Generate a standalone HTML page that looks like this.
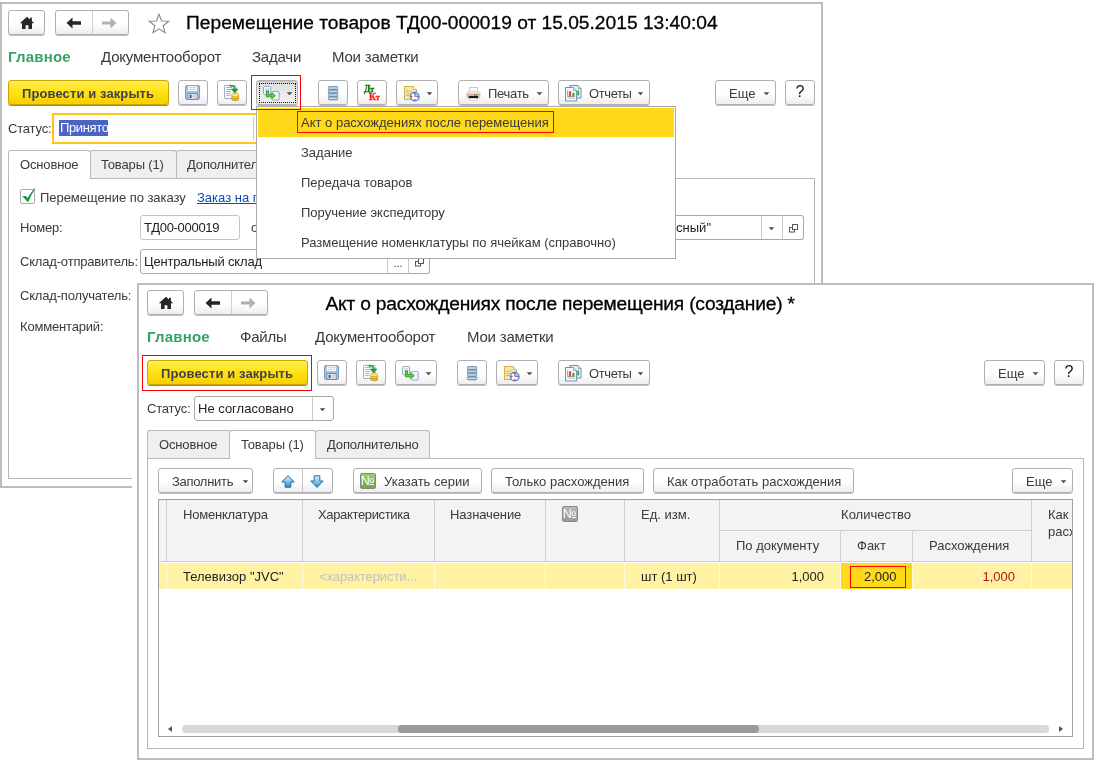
<!DOCTYPE html>
<html lang="ru"><head><meta charset="utf-8"><title>Перемещение товаров</title>
<style>
*{box-sizing:border-box;margin:0;padding:0}
html,body{width:1104px;height:770px;background:#fff;overflow:hidden}
body{will-change:transform;position:relative;font-family:"Liberation Sans",sans-serif;font-size:13px;color:#3a3a3a}
.abs,.win,.btn,.t,.inp,.tab,.panel{position:absolute}
.win{border:2px solid #bdbdbd;background:#fff}
.t{white-space:nowrap;line-height:16px;height:16px}
.lb{letter-spacing:-.18px}
.title{font-size:19.2px;color:#000;line-height:24px;height:24px;-webkit-text-stroke:.3px #000}
.menu{font-size:15px;line-height:18px;height:18px;color:#3a3a3a;letter-spacing:-.2px}
.menu.on{font-weight:bold;color:#35a366;letter-spacing:.2px}
.btn{height:25px;border:1px solid #b0b0b0;border-radius:3px;background:linear-gradient(#fff 0%,#fff 55%,#efedef 100%);box-shadow:0 1px 0 #bdbdbd}
.btn.y{border-color:#c9a700;background:linear-gradient(#ffec52 0%,#ffe212 50%,#f6cf00 100%);box-shadow:0 1px 0 #a88f14}
.btn.y .t{font-weight:bold;color:#40434c;letter-spacing:.1px}
.inp{border:1px solid #c4c4c4;border-radius:3px;background:#fff}
.tab{height:28px;border:1px solid #b9b9b9;border-bottom:none;border-radius:3px 3px 0 0;background:#f0eef0}
.tab.on{background:#fff;height:29px}
.tab .t{letter-spacing:-.15px}
.panel{border:1px solid #b6b6b6;background:#fff}
.vl{top:0;width:1px;background:#cfcfcf}
.red{position:absolute;border:1px solid #f00}
svg{position:absolute;overflow:visible}
</style></head><body>
<div class="win" style="left:0;top:2px;width:823px;height:486px"></div>
<div class="btn" style="left:8px;top:10px;width:37px"><svg width="16" height="14" style="left:10px;top:5px" viewBox="0 0 16 14"><path d="M8 0.8 L0.8 7.2 H3 V13 H6.6 V9.2 H9.4 V13 H13 V7.2 H15.2 L12.9 5.1 V1.8 H11 V3.4 Z" fill="#262626"/></svg></div>
<div class="btn" style="left:55px;top:10px;width:74px"><div class="abs" style="left:36px;top:0;width:1px;height:23px;background:#d0d0d0"></div>
<svg width="16" height="12" style="left:10px;top:6px" viewBox="0 0 16 12"><path d="M0.5 6 L6.5 0.5 V4.3 H15 V7.7 H6.5 V11.5 Z" fill="#262626"/></svg>
<svg width="16" height="12" style="left:45px;top:6px" viewBox="0 0 16 12"><path d="M15.5 6 L9.5 0.5 V4.6 H1 V7.4 H9.5 V11.5 Z" fill="#b0b0b0"/></svg></div>
<svg width="22" height="21" style="left:147.5px;top:13px" viewBox="0 0 22 21"><path d="M11 1.2 L13.6 8 L20.8 8.3 L15.1 12.8 L17.1 19.8 L11 15.8 L4.9 19.8 L6.9 12.8 L1.2 8.3 L8.4 8 Z" fill="#fff" stroke="#8a8a8a" stroke-width="1.1" stroke-linejoin="miter"/></svg>
<div class="t title" style="left:186px;top:11px">Перемещение товаров ТД00-000019 от 15.05.2015 13:40:04</div>
<div class="t menu on" style="left:8px;top:48px">Главное</div>
<div class="t menu" style="left:101px;top:48px">Документооборот</div>
<div class="t menu" style="left:252px;top:48px">Задачи</div>
<div class="t menu" style="left:332px;top:48px">Мои заметки</div>
<div class="btn y" style="left:8px;top:80px;width:161px"><div class="t" style="left:13px;top:5px">Провести и закрыть</div></div>
<div class="btn" style="left:178px;top:80px;width:30px"><svg width="16" height="16" style="left:6px;top:4px" viewBox="0 0 16 16">
<rect x="0.5" y="0.5" width="14" height="14" rx="1.4" fill="#a6c2de" stroke="#7d9cbc"/>
<rect x="2.8" y="0.9" width="9.4" height="5.4" fill="#fff" stroke="#9bb6d0" stroke-width=".6"/>
<path d="M4 2.6 H11 M4 4.4 H11" stroke="#a8d2e8" stroke-width=".8"/>
<rect x="2.9" y="8.5" width="9.2" height="5.8" fill="#e9edf2" stroke="#5d7d9d" stroke-width=".8"/>
<rect x="4.6" y="9.8" width="2" height="3.4" fill="#3a5b82"/>
<rect x="7.4" y="9.4" width="4" height="4.2" fill="#cfd6de"/>
</svg></div>
<div class="btn" style="left:217px;top:80px;width:30px"><svg width="16" height="17" style="left:6px;top:4px" viewBox="0 0 16 17">
<rect x="0.5" y="0.5" width="11.6" height="13" rx=".8" fill="#fcfdff" stroke="#8ba6c2" stroke-width=".9"/>
<path d="M2.2 2.5 H8 M2.2 4.5 H7 M2.2 6.5 H7 M2.2 8.5 H6.4 M2.2 10.5 H6.4" stroke="#9db3c9" stroke-width="1"/>
<path d="M5.5 0.6 C9.5 0.2 10.6 2 10.6 4.2" fill="none" stroke="#2f9a2f" stroke-width="1.8"/>
<path d="M7.2 4 H14 L10.6 8 Z" fill="#2f9a2f" stroke="#1f7d22" stroke-width=".5"/>
<ellipse cx="11.2" cy="14" rx="3.8" ry="1.8" fill="#e9b52a" stroke="#c48f10" stroke-width=".6"/>
<ellipse cx="11.2" cy="12" rx="3.8" ry="1.8" fill="#f4c83a" stroke="#c48f10" stroke-width=".6"/>
<ellipse cx="11.2" cy="10" rx="3.8" ry="1.8" fill="#fbe27a" stroke="#c99a18" stroke-width=".6"/>
</svg></div>
<div class="btn" style="left:256px;top:80px;width:42px;background:linear-gradient(#c4c4c4 0%,#dedede 12%,#e9e9e9 50%,#f1f1f1 100%)"><div class="abs" style="left:2px;top:2px;width:37px;height:20px;border:1px dotted #111"></div><svg width="17" height="15" style="left:6px;top:5px" viewBox="0 0 17 15">
<rect x="0.5" y="0.5" width="7.2" height="8.2" rx="1" fill="#f1f6fb" stroke="#86a3c0" stroke-width=".9"/>
<path d="M2.2 3 H6 M2.2 4.8 H6" stroke="#a9c0d6" stroke-width=".8"/>
<rect x="9" y="5.4" width="7.2" height="8.6" rx="1" fill="#eef4fa" stroke="#86a3c0" stroke-width=".9"/>
<path d="M3.4 5 H5.6 V8.7 H8.8 V6.8 L12.3 9.7 L8.8 12.6 V10.8 H3.4 Z" fill="#6bd047" stroke="#2a9a24" stroke-width=".9" stroke-linejoin="round"/>
</svg><svg width="7" height="4" style="left:29px;top:11px" viewBox="0 0 7 4"><path d="M0.7 0.3 H6.3 L3.5 3.3 Z" fill="#4d4d4d"/></svg></div>
<div class="btn" style="left:318px;top:80px;width:30px"><svg width="11" height="15" style="left:9px;top:5px" viewBox="0 0 11 15"><defs><linearGradient id="lg095" x1="0" y1="0" x2="0" y2="1"><stop offset="0" stop-color="#86a5c2"/><stop offset=".55" stop-color="#cddbe8"/><stop offset="1" stop-color="#7c9cba"/></linearGradient><linearGradient id="lg195" x1="0" y1="0" x2="0" y2="1"><stop offset="0" stop-color="#86a5c2"/><stop offset=".55" stop-color="#cddbe8"/><stop offset="1" stop-color="#7c9cba"/></linearGradient><linearGradient id="lg295" x1="0" y1="0" x2="0" y2="1"><stop offset="0" stop-color="#86a5c2"/><stop offset=".55" stop-color="#cddbe8"/><stop offset="1" stop-color="#7c9cba"/></linearGradient><linearGradient id="lg395" x1="0" y1="0" x2="0" y2="1"><stop offset="0" stop-color="#86a5c2"/><stop offset=".55" stop-color="#cddbe8"/><stop offset="1" stop-color="#7c9cba"/></linearGradient></defs><rect x="0.4" y="0.4" width="9.4" height="3.2" rx=".9" fill="url(#lg095)" stroke="#5f82a3" stroke-width=".7"/><rect x="0.4" y="3.85" width="9.4" height="3.2" rx=".9" fill="url(#lg195)" stroke="#5f82a3" stroke-width=".7"/><rect x="0.4" y="7.300000000000001" width="9.4" height="3.2" rx=".9" fill="url(#lg295)" stroke="#5f82a3" stroke-width=".7"/><rect x="0.4" y="10.750000000000002" width="9.4" height="3.2" rx=".9" fill="url(#lg395)" stroke="#5f82a3" stroke-width=".7"/></svg></div>
<div class="btn" style="left:357px;top:80px;width:30px"><div class="t" style="left:6px;top:3px;font-family:'Liberation Serif',serif;font-weight:bold;font-size:9.5px;line-height:10px;height:10px;color:#0b7a0b;letter-spacing:-.2px;-webkit-text-stroke:.35px #0b7a0b">Д<span style="font-size:8px">т</span></div>
<div class="t" style="left:11px;top:11px;font-family:'Liberation Serif',serif;font-weight:bold;font-size:9.5px;line-height:10px;height:10px;color:#ff2222;letter-spacing:-.2px;-webkit-text-stroke:.35px #ff2222">К<span style="font-size:8px">т</span></div></div>
<div class="btn" style="left:396px;top:80px;width:42px"><svg width="16" height="16" style="left:7px;top:5px" viewBox="0 0 16 16">
<path d="M0.5 0.5 H9.4 L12.5 3.6 V13.6 H0.5 Z" fill="#f6e6ac" stroke="#d2b04a"/>
<path d="M9.4 0.5 V3.6 H12.5" fill="#fff8dc" stroke="#d2b04a" stroke-width=".8"/>
<path d="M2.4 5.2 H4.4 M5.4 5.2 H7.4 M2.4 7.4 H3.4 M4.4 7.4 H6.4 M2.4 9.6 H5.4" stroke="#c9a640" stroke-width="1"/>
<circle cx="10.8" cy="10.6" r="4.3" fill="#fff" stroke="#3f7ccb" stroke-width="1.2"/>
<path d="M10.8 10.6 V7 A3.6 3.6 0 0 1 14.4 10.6 Z" fill="#a9c4ee"/>
<path d="M10.8 7.4 V10.6 H13.6" fill="none" stroke="#3b6fb5" stroke-width=".7"/>
<circle cx="10.8" cy="7.6" r=".8" fill="#f02a2a"/><circle cx="10.8" cy="13.6" r=".8" fill="#f02a2a"/>
<circle cx="7.8" cy="10.6" r=".8" fill="#f02a2a"/><circle cx="13.8" cy="10.6" r=".8" fill="#f02a2a"/>
</svg><svg width="7" height="4" style="left:29px;top:11px" viewBox="0 0 7 4"><path d="M0.7 0.3 H6.3 L3.5 3.3 Z" fill="#4d4d4d"/></svg></div>
<div class="btn" style="left:458px;top:80px;width:91px"><svg width="15" height="14" style="left:7px;top:6px" viewBox="0 0 15 14">
<rect x="3.4" y="0.5" width="8" height="5.4" fill="#f7fafd" stroke="#a9c6e2" stroke-width=".8"/>
<rect x="0.5" y="4.6" width="13.8" height="6.8" rx="2" fill="#d3bba8" stroke="#e6dad0" stroke-width=".8"/>
<rect x="1.4" y="5" width="12" height="1.8" rx=".9" fill="#efe6de"/>
<rect x="2.8" y="9" width="9.2" height="2.3" fill="#1a1a1a"/>
<rect x="3.2" y="11.3" width="8.4" height="2.2" fill="#fff" stroke="#c4c4c4" stroke-width=".6"/>
<circle cx="8.8" cy="7.8" r=".9" fill="#f03a2a"/><circle cx="10.9" cy="7.8" r=".9" fill="#2fb02f"/>
</svg><div class="t" style="left:29px;top:5px;letter-spacing:-.3px">Печать</div><svg width="7" height="4" style="left:77px;top:11px" viewBox="0 0 7 4"><path d="M0.7 0.3 H6.3 L3.5 3.3 Z" fill="#4d4d4d"/></svg></div>
<div class="btn" style="left:558px;top:80px;width:92px"><svg width="17" height="17" style="left:6px;top:4px" viewBox="0 0 17 17">
<path d="M4.9 0.5 H13 L16 3.5 V13 H4.9 Z" fill="#eef4fa" stroke="#6f8fb0"/>
<path d="M13 0.5 V3.5 H16" fill="#dbe6f1" stroke="#6f8fb0" stroke-width=".7"/>
<rect x="12.3" y="5.4" width="1.8" height="5" fill="#2fa52f"/>
<path d="M0.5 2.5 H8.6 L11.6 5.5 V16 H0.5 Z" fill="#f6f9fc" stroke="#6f8fb0"/>
<path d="M8.6 2.5 V5.5 H11.6" fill="#dbe6f1" stroke="#6f8fb0" stroke-width=".7"/>
<path d="M2.7 5.6 V11.6 H9.8" fill="none" stroke="#8a5a5a" stroke-width=".7"/>
<rect x="4.1" y="6.2" width="2" height="5.2" fill="#f0402a"/>
<rect x="7.4" y="7.8" width="2" height="3.6" fill="#2fa52f"/>
<path d="M2.4 13.4 H9.8" stroke="#9fcbe6" stroke-width=".9"/>
</svg><div class="t" style="left:30px;top:5px;letter-spacing:-.4px">Отчеты</div><svg width="7" height="4" style="left:78px;top:11px" viewBox="0 0 7 4"><path d="M0.7 0.3 H6.3 L3.5 3.3 Z" fill="#4d4d4d"/></svg></div>
<div class="btn" style="left:715px;top:80px;width:61px"><div class="t" style="left:13px;top:5px">Еще</div><svg width="7" height="4" style="left:47px;top:11px" viewBox="0 0 7 4"><path d="M0.7 0.3 H6.3 L3.5 3.3 Z" fill="#4d4d4d"/></svg></div>
<div class="btn" style="left:785px;top:80px;width:30px"><div class="t" style="left:9.5px;top:3px;font-size:16px;color:#111">?</div></div>
<div class="t lb" style="left:8px;top:121px">Статус:</div>
<div class="abs" style="left:52px;top:113px;width:260px;height:31px;border:2px solid #ffc61a;background:#fff"></div>
<div class="abs" style="left:59px;top:120px;width:49px;height:16px;background:#4c63c2"></div>
<div class="t" style="left:60px;top:120px;color:#fff;letter-spacing:-.35px">Принято</div>
<div class="abs" style="left:253px;top:117px;width:1px;height:23px;background:#c8c8c8"></div>
<div class="panel" style="left:8px;top:178px;width:807px;height:301px"></div>
<div class="tab" style="left:90px;top:150px;width:87px"><div class="t" style="left:10px;top:6px">Товары (1)</div></div>
<div class="tab" style="left:176px;top:150px;width:110px"><div class="t" style="left:10px;top:6px">Дополнительно</div></div>
<div class="tab on" style="left:8px;top:150px;width:83px"><div class="t" style="left:11px;top:6px">Основное</div></div>
<div class="abs" style="left:20px;top:189px;width:15px;height:15px;border:1px solid #ababab;border-radius:2px;background:#fff"></div>
<svg width="16" height="16" style="left:20px;top:187px" viewBox="0 0 16 16"><path d="M2.1 9.3 L5.8 8.9 L7.6 11 C10 7 12.5 3.5 14.8 0.9 L14.8 2.6 C12.5 6 10.5 10 8.4 14.8 L7.2 14.8 C5.8 12.6 4 10.8 2.1 9.3 Z" fill="#0f9a3c"/></svg>
<div class="t" style="left:40px;top:190px;letter-spacing:-.05px">Перемещение по заказу</div>
<div class="t" style="left:197px;top:190px;color:#0a4bb5;text-decoration:underline">Заказ на перемещение</div>
<div class="t lb" style="left:20px;top:220px">Номер:</div>
<div class="inp" style="left:140px;top:215px;width:100px;height:25px"><div class="t" style="left:3px;top:4px;color:#222;letter-spacing:-.3px">ТД00-000019</div></div>
<div class="t lb" style="left:251px;top:220px">от:</div>
<div class="inp" style="left:560px;top:215px;width:223px;height:25px;border-color:#a8a8a8;border-radius:3px 0 0 3px"><div class="t" style="left:0;width:150px;text-align:right;top:4px;color:#222">Магазин "Красный"</div><div class="abs" style="left:200px;top:0;width:1px;height:23px;background:#c8c8c8"></div><svg width="7" height="4" style="left:207px;top:11px" viewBox="0 0 7 4"><path d="M0.7 0.3 H6.3 L3.5 3.3 Z" fill="#4d4d4d"/></svg></div>
<div class="btn" style="left:782px;top:215px;width:22px;border-radius:0 3px 3px 0;box-shadow:none;background:#fff;border-color:#a8a8a8;border-left-color:#c8c8c8"><svg width="10" height="9" style="left:6px;top:8px" viewBox="0 0 10 9"><rect x="0.5" y="3.5" width="5" height="4.5" fill="#fff" stroke="#555"/><rect x="3.5" y="0.5" width="5" height="5" fill="#fff" stroke="#555"/></svg></div>
<div class="t lb" style="left:20px;top:254px">Склад-отправитель:</div>
<div class="inp" style="left:140px;top:249px;width:248px;height:25px;border-color:#a8a8a8;border-radius:3px 0 0 3px"><div class="t" style="left:3px;top:4px;color:#222;letter-spacing:-.18px">Центральный склад</div></div>
<div class="btn" style="left:387px;top:249px;width:22px;border-radius:0;box-shadow:none;background:#fff;border-color:#a8a8a8;border-left-color:#c8c8c8"><div class="t" style="left:5.5px;top:5px;font-size:11px">...</div></div>
<div class="btn" style="left:408px;top:249px;width:22px;border-radius:0 3px 3px 0;box-shadow:none;background:#fff;border-color:#a8a8a8;border-left-color:#c8c8c8"><svg width="10" height="9" style="left:6px;top:8px" viewBox="0 0 10 9"><rect x="0.5" y="3.5" width="5" height="4.5" fill="#fff" stroke="#555"/><rect x="3.5" y="0.5" width="5" height="5" fill="#fff" stroke="#555"/></svg></div>
<div class="t lb" style="left:20px;top:288px">Склад-получатель:</div>
<div class="t lb" style="left:20px;top:319px">Комментарий:</div>
<div class="abs" style="left:256px;top:106px;width:420px;height:153px;border:1px solid #a9a9a9;background:#fff"></div>
<div class="abs" style="left:258px;top:108px;width:416px;height:29px;background:#ffd91a"></div>
<div class="red" style="left:297px;top:111px;width:257px;height:22px"></div>
<div class="t" style="left:301px;top:115px">Акт о расхождениях после перемещения</div>
<div class="t" style="left:301px;top:145px">Задание</div>
<div class="t" style="left:301px;top:175px">Передача товаров</div>
<div class="t" style="left:301px;top:205px">Поручение экспедитору</div>
<div class="t" style="left:301px;top:235px">Размещение номенклатуры по ячейкам (справочно)</div>
<div class="red" style="left:251px;top:75px;width:50px;height:35px"></div>
<div class="abs" style="left:132px;top:283px;width:6px;height:480px;background:#fff"></div>
<div class="win" style="left:137px;top:283px;width:957px;height:477px"></div>
<div class="btn" style="left:147px;top:290px;width:37px"><svg width="16" height="14" style="left:10px;top:5px" viewBox="0 0 16 14"><path d="M8 0.8 L0.8 7.2 H3 V13 H6.6 V9.2 H9.4 V13 H13 V7.2 H15.2 L12.9 5.1 V1.8 H11 V3.4 Z" fill="#262626"/></svg></div>
<div class="btn" style="left:194px;top:290px;width:74px"><div class="abs" style="left:36px;top:0;width:1px;height:23px;background:#d0d0d0"></div>
<svg width="16" height="12" style="left:10px;top:6px" viewBox="0 0 16 12"><path d="M0.5 6 L6.5 0.5 V4.3 H15 V7.7 H6.5 V11.5 Z" fill="#262626"/></svg>
<svg width="16" height="12" style="left:45px;top:6px" viewBox="0 0 16 12"><path d="M15.5 6 L9.5 0.5 V4.6 H1 V7.4 H9.5 V11.5 Z" fill="#b0b0b0"/></svg></div>
<div class="t title" style="left:325.5px;top:292px;letter-spacing:-.2px">Акт о расхождениях после перемещения (создание) *</div>
<div class="t menu on" style="left:147px;top:328px">Главное</div>
<div class="t menu" style="left:240px;top:328px">Файлы</div>
<div class="t menu" style="left:315px;top:328px">Документооборот</div>
<div class="t menu" style="left:467px;top:328px">Мои заметки</div>
<div class="red" style="left:142px;top:355px;width:170px;height:36px"></div>
<div class="btn y" style="left:147px;top:360px;width:161px"><div class="t" style="left:13px;top:5px">Провести и закрыть</div></div>
<div class="btn" style="left:317px;top:360px;width:30px"><svg width="16" height="16" style="left:6px;top:4px" viewBox="0 0 16 16">
<rect x="0.5" y="0.5" width="14" height="14" rx="1.4" fill="#a6c2de" stroke="#7d9cbc"/>
<rect x="2.8" y="0.9" width="9.4" height="5.4" fill="#fff" stroke="#9bb6d0" stroke-width=".6"/>
<path d="M4 2.6 H11 M4 4.4 H11" stroke="#a8d2e8" stroke-width=".8"/>
<rect x="2.9" y="8.5" width="9.2" height="5.8" fill="#e9edf2" stroke="#5d7d9d" stroke-width=".8"/>
<rect x="4.6" y="9.8" width="2" height="3.4" fill="#3a5b82"/>
<rect x="7.4" y="9.4" width="4" height="4.2" fill="#cfd6de"/>
</svg></div>
<div class="btn" style="left:356px;top:360px;width:30px"><svg width="16" height="17" style="left:6px;top:4px" viewBox="0 0 16 17">
<rect x="0.5" y="0.5" width="11.6" height="13" rx=".8" fill="#fcfdff" stroke="#8ba6c2" stroke-width=".9"/>
<path d="M2.2 2.5 H8 M2.2 4.5 H7 M2.2 6.5 H7 M2.2 8.5 H6.4 M2.2 10.5 H6.4" stroke="#9db3c9" stroke-width="1"/>
<path d="M5.5 0.6 C9.5 0.2 10.6 2 10.6 4.2" fill="none" stroke="#2f9a2f" stroke-width="1.8"/>
<path d="M7.2 4 H14 L10.6 8 Z" fill="#2f9a2f" stroke="#1f7d22" stroke-width=".5"/>
<ellipse cx="11.2" cy="14" rx="3.8" ry="1.8" fill="#e9b52a" stroke="#c48f10" stroke-width=".6"/>
<ellipse cx="11.2" cy="12" rx="3.8" ry="1.8" fill="#f4c83a" stroke="#c48f10" stroke-width=".6"/>
<ellipse cx="11.2" cy="10" rx="3.8" ry="1.8" fill="#fbe27a" stroke="#c99a18" stroke-width=".6"/>
</svg></div>
<div class="btn" style="left:395px;top:360px;width:42px"><svg width="17" height="15" style="left:6px;top:5px" viewBox="0 0 17 15">
<rect x="0.5" y="0.5" width="7.2" height="8.2" rx="1" fill="#f1f6fb" stroke="#86a3c0" stroke-width=".9"/>
<path d="M2.2 3 H6 M2.2 4.8 H6" stroke="#a9c0d6" stroke-width=".8"/>
<rect x="9" y="5.4" width="7.2" height="8.6" rx="1" fill="#eef4fa" stroke="#86a3c0" stroke-width=".9"/>
<path d="M3.4 5 H5.6 V8.7 H8.8 V6.8 L12.3 9.7 L8.8 12.6 V10.8 H3.4 Z" fill="#6bd047" stroke="#2a9a24" stroke-width=".9" stroke-linejoin="round"/>
</svg><svg width="7" height="4" style="left:29px;top:11px" viewBox="0 0 7 4"><path d="M0.7 0.3 H6.3 L3.5 3.3 Z" fill="#4d4d4d"/></svg></div>
<div class="btn" style="left:457px;top:360px;width:30px"><svg width="11" height="15" style="left:9px;top:5px" viewBox="0 0 11 15"><defs><linearGradient id="lg095" x1="0" y1="0" x2="0" y2="1"><stop offset="0" stop-color="#86a5c2"/><stop offset=".55" stop-color="#cddbe8"/><stop offset="1" stop-color="#7c9cba"/></linearGradient><linearGradient id="lg195" x1="0" y1="0" x2="0" y2="1"><stop offset="0" stop-color="#86a5c2"/><stop offset=".55" stop-color="#cddbe8"/><stop offset="1" stop-color="#7c9cba"/></linearGradient><linearGradient id="lg295" x1="0" y1="0" x2="0" y2="1"><stop offset="0" stop-color="#86a5c2"/><stop offset=".55" stop-color="#cddbe8"/><stop offset="1" stop-color="#7c9cba"/></linearGradient><linearGradient id="lg395" x1="0" y1="0" x2="0" y2="1"><stop offset="0" stop-color="#86a5c2"/><stop offset=".55" stop-color="#cddbe8"/><stop offset="1" stop-color="#7c9cba"/></linearGradient></defs><rect x="0.4" y="0.4" width="9.4" height="3.2" rx=".9" fill="url(#lg095)" stroke="#5f82a3" stroke-width=".7"/><rect x="0.4" y="3.85" width="9.4" height="3.2" rx=".9" fill="url(#lg195)" stroke="#5f82a3" stroke-width=".7"/><rect x="0.4" y="7.300000000000001" width="9.4" height="3.2" rx=".9" fill="url(#lg295)" stroke="#5f82a3" stroke-width=".7"/><rect x="0.4" y="10.750000000000002" width="9.4" height="3.2" rx=".9" fill="url(#lg395)" stroke="#5f82a3" stroke-width=".7"/></svg></div>
<div class="btn" style="left:496px;top:360px;width:42px"><svg width="16" height="16" style="left:7px;top:5px" viewBox="0 0 16 16">
<path d="M0.5 0.5 H9.4 L12.5 3.6 V13.6 H0.5 Z" fill="#f6e6ac" stroke="#d2b04a"/>
<path d="M9.4 0.5 V3.6 H12.5" fill="#fff8dc" stroke="#d2b04a" stroke-width=".8"/>
<path d="M2.4 5.2 H4.4 M5.4 5.2 H7.4 M2.4 7.4 H3.4 M4.4 7.4 H6.4 M2.4 9.6 H5.4" stroke="#c9a640" stroke-width="1"/>
<circle cx="10.8" cy="10.6" r="4.3" fill="#fff" stroke="#3f7ccb" stroke-width="1.2"/>
<path d="M10.8 10.6 V7 A3.6 3.6 0 0 1 14.4 10.6 Z" fill="#a9c4ee"/>
<path d="M10.8 7.4 V10.6 H13.6" fill="none" stroke="#3b6fb5" stroke-width=".7"/>
<circle cx="10.8" cy="7.6" r=".8" fill="#f02a2a"/><circle cx="10.8" cy="13.6" r=".8" fill="#f02a2a"/>
<circle cx="7.8" cy="10.6" r=".8" fill="#f02a2a"/><circle cx="13.8" cy="10.6" r=".8" fill="#f02a2a"/>
</svg><svg width="7" height="4" style="left:29px;top:11px" viewBox="0 0 7 4"><path d="M0.7 0.3 H6.3 L3.5 3.3 Z" fill="#4d4d4d"/></svg></div>
<div class="btn" style="left:558px;top:360px;width:92px"><svg width="17" height="17" style="left:6px;top:4px" viewBox="0 0 17 17">
<path d="M4.9 0.5 H13 L16 3.5 V13 H4.9 Z" fill="#eef4fa" stroke="#6f8fb0"/>
<path d="M13 0.5 V3.5 H16" fill="#dbe6f1" stroke="#6f8fb0" stroke-width=".7"/>
<rect x="12.3" y="5.4" width="1.8" height="5" fill="#2fa52f"/>
<path d="M0.5 2.5 H8.6 L11.6 5.5 V16 H0.5 Z" fill="#f6f9fc" stroke="#6f8fb0"/>
<path d="M8.6 2.5 V5.5 H11.6" fill="#dbe6f1" stroke="#6f8fb0" stroke-width=".7"/>
<path d="M2.7 5.6 V11.6 H9.8" fill="none" stroke="#8a5a5a" stroke-width=".7"/>
<rect x="4.1" y="6.2" width="2" height="5.2" fill="#f0402a"/>
<rect x="7.4" y="7.8" width="2" height="3.6" fill="#2fa52f"/>
<path d="M2.4 13.4 H9.8" stroke="#9fcbe6" stroke-width=".9"/>
</svg><div class="t" style="left:30px;top:5px;letter-spacing:-.4px">Отчеты</div><svg width="7" height="4" style="left:78px;top:11px" viewBox="0 0 7 4"><path d="M0.7 0.3 H6.3 L3.5 3.3 Z" fill="#4d4d4d"/></svg></div>
<div class="btn" style="left:984px;top:360px;width:61px"><div class="t" style="left:13px;top:5px">Еще</div><svg width="7" height="4" style="left:47px;top:11px" viewBox="0 0 7 4"><path d="M0.7 0.3 H6.3 L3.5 3.3 Z" fill="#4d4d4d"/></svg></div>
<div class="btn" style="left:1054px;top:360px;width:30px"><div class="t" style="left:9.5px;top:3px;font-size:16px;color:#111">?</div></div>
<div class="t lb" style="left:147px;top:401px">Статус:</div>
<div class="inp" style="left:194px;top:396px;width:140px;height:25px;border-color:#a8a8a8"><div class="t" style="left:3px;top:4px;color:#222">Не согласовано</div><div class="abs" style="left:117px;top:0;width:1px;height:23px;background:#c8c8c8"></div><svg width="7" height="4" style="left:124px;top:11px" viewBox="0 0 7 4"><path d="M0.7 0.3 H6.3 L3.5 3.3 Z" fill="#4d4d4d"/></svg></div>
<div class="panel" style="left:147px;top:458px;width:937px;height:291px"></div>
<div class="tab" style="left:147px;top:430px;width:84px"><div class="t" style="left:11px;top:6px">Основное</div></div>
<div class="tab" style="left:315px;top:430px;width:115px"><div class="t" style="left:11px;top:6px">Дополнительно</div></div>
<div class="tab on" style="left:229px;top:430px;width:87px"><div class="t" style="left:11px;top:6px">Товары (1)</div></div>
<div class="btn" style="left:158px;top:468px;width:95px"><div class="t" style="left:13px;top:5px;letter-spacing:-.3px">Заполнить</div><svg width="7" height="4" style="left:83px;top:11px" viewBox="0 0 7 4"><path d="M0.7 0.3 H6.3 L3.5 3.3 Z" fill="#4d4d4d"/></svg></div>
<div class="btn" style="left:273px;top:468px;width:60px"><div class="abs" style="left:28px;top:0;width:1px;height:23px;background:#c4c4c4"></div><svg width="14" height="13" style="left:7px;top:6px" viewBox="0 0 14 13"><defs><linearGradient id="gu7" x1="0" y1="0" x2="0" y2="1"><stop offset="0" stop-color="#d9f0fd"/><stop offset=".45" stop-color="#8fc9f0"/><stop offset="1" stop-color="#2f86c8"/></linearGradient></defs>
<path d="M7 0.6 L13.2 7 H9.8 V12.2 H4.2 V7 H0.8 Z" fill="url(#gu7)" stroke="#25689e" stroke-width="1" stroke-linejoin="round"/></svg><svg width="14" height="13" style="left:36px;top:6px" viewBox="0 0 14 13"><defs><linearGradient id="gd36" x1="0" y1="0" x2="0" y2="1"><stop offset="0" stop-color="#d9f0fd"/><stop offset=".45" stop-color="#8fc9f0"/><stop offset="1" stop-color="#2f86c8"/></linearGradient></defs>
<path d="M7 12.4 L13.2 6 H9.8 V0.8 H4.2 V6 H0.8 Z" fill="url(#gd36)" stroke="#25689e" stroke-width="1" stroke-linejoin="round"/></svg></div>
<div class="btn" style="left:353px;top:468px;width:129px"><div class="abs" style="left:6px;top:4px;width:16px;height:16px;border:1px solid #7f8b76;border-radius:2px;background:linear-gradient(#97cf70,#69a946);overflow:hidden"><div class="t" style="left:0;top:0;width:14px;height:14px;line-height:14px;text-align:center;color:#fff;font-size:13px;letter-spacing:-1px;text-indent:-1.5px">№</div></div><div class="t" style="left:30px;top:5px">Указать серии</div></div>
<div class="btn" style="left:491px;top:468px;width:153px"><div class="t" style="left:13px;top:5px">Только расхождения</div></div>
<div class="btn" style="left:653px;top:468px;width:201px"><div class="t" style="left:13px;top:5px">Как отработать расхождения</div></div>
<div class="btn" style="left:1012px;top:468px;width:61px"><div class="t" style="left:13px;top:5px">Еще</div><svg width="7" height="4" style="left:47px;top:11px" viewBox="0 0 7 4"><path d="M0.7 0.3 H6.3 L3.5 3.3 Z" fill="#4d4d4d"/></svg></div>
<div class="abs" style="left:158px;top:499px;width:915px;height:238px;border:1px solid #a0a0a0;background:#fff;overflow:hidden"><div class="abs" style="left:0;top:0;width:913px;height:62px;background:#f5f2f5;border-bottom:1px solid #d0d0d0"></div>
<div class="abs" style="left:0;top:63px;width:913px;height:26px;background:#fff2a2"></div>
<div class="abs" style="left:681px;top:63px;width:72px;height:26px;background:#ffd91a"></div>
<div class="abs vl" style="left:7px;height:62px"></div>
<div class="abs" style="left:7px;top:63px;width:1px;height:26px;background:#fffbe0"></div>
<div class="abs vl" style="left:143px;height:62px"></div>
<div class="abs" style="left:143px;top:63px;width:1px;height:26px;background:#fffbe0"></div>
<div class="abs vl" style="left:275px;height:62px"></div>
<div class="abs" style="left:275px;top:63px;width:1px;height:26px;background:#fffbe0"></div>
<div class="abs vl" style="left:386px;height:62px"></div>
<div class="abs" style="left:386px;top:63px;width:1px;height:26px;background:#fffbe0"></div>
<div class="abs vl" style="left:465px;height:62px"></div>
<div class="abs" style="left:465px;top:63px;width:1px;height:26px;background:#fffbe0"></div>
<div class="abs vl" style="left:560px;height:62px"></div>
<div class="abs" style="left:560px;top:63px;width:1px;height:26px;background:#fffbe0"></div>
<div class="abs vl" style="left:872px;height:62px"></div>
<div class="abs" style="left:872px;top:63px;width:1px;height:26px;background:#fffbe0"></div>
<div class="abs vl" style="left:681px;top:31px;height:31px"></div>
<div class="abs" style="left:681px;top:63px;width:1px;height:26px;background:#fffbe0"></div>
<div class="abs vl" style="left:753px;top:31px;height:31px"></div>
<div class="abs" style="left:753px;top:63px;width:1px;height:26px;background:#fffbe0"></div>
<div class="abs" style="left:561px;top:30px;width:311px;height:1px;background:#cfcfcf"></div>
<div class="t" style="left:24px;top:7px;letter-spacing:-.2px">Номенклатура</div>
<div class="t" style="left:159px;top:7px;letter-spacing:-.35px">Характеристика</div>
<div class="t" style="left:291px;top:7px;letter-spacing:-.1px">Назначение</div>
<div class="abs" style="left:403px;top:6px;width:16px;height:16px;border:1px solid #8a8a8a;border-radius:2px;background:linear-gradient(#b9b9b9,#9a9a9a);overflow:hidden"><div class="t" style="left:0;top:0;width:14px;height:14px;line-height:14px;text-align:center;color:#fff;font-size:13px;letter-spacing:-1px;text-indent:-1.5px">№</div></div>
<div class="t" style="left:482px;top:7px">Ед. изм.</div>
<div class="t" style="left:562px;top:7px;width:310px;text-align:center">Количество</div>
<div class="t" style="left:889px;top:7px">Как</div>
<div class="t" style="left:889px;top:24px">расхождения</div>
<div class="t" style="left:577px;top:38px">По документу</div>
<div class="t" style="left:698px;top:38px">Факт</div>
<div class="t" style="left:770px;top:38px">Расхождения</div>
<div class="t" style="left:24px;top:69px;color:#222">Телевизор "JVC"</div>
<div class="t" style="left:160px;top:69px;color:#c2c2c2;font-size:13px;letter-spacing:-.1px">&lt;характеристи...</div>
<div class="t" style="left:482px;top:69px;color:#222">шт (1 шт)</div>
<div class="t" style="left:562px;top:69px;width:103px;text-align:right;color:#222">1,000</div>
<div class="red" style="left:691px;top:66px;width:56px;height:22px"></div>
<div class="t" style="left:683px;top:69px;width:54.5px;text-align:right;color:#222">2,000</div>
<div class="t" style="left:754px;top:69px;width:102px;text-align:right;color:#b01616">1,000</div>
<div class="abs" style="left:23px;top:225px;width:867px;height:8px;border-radius:4px;background:#d8d8d8"></div>
<div class="abs" style="left:239px;top:225px;width:361px;height:8px;border-radius:4px;background:#9a9a9a"></div>
<div class="abs" style="left:9px;top:226px;width:0;height:0;border-top:3px solid transparent;border-bottom:3px solid transparent;border-right:4px solid #555"></div>
<div class="abs" style="left:900px;top:226px;width:0;height:0;border-top:3px solid transparent;border-bottom:3px solid transparent;border-left:4px solid #555"></div></div>
</body></html>
